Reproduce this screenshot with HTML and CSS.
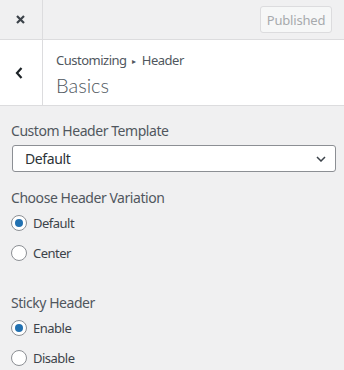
FILE: index.html
```html
<!DOCTYPE html>
<html lang="en">
<head>
    <meta charset="UTF-8">
    <meta name="viewport" content="width=device-width, initial-scale=1.0">
    <title>Customizing Header</title>
    <link rel="stylesheet" href="styles.css">
</head>
<body>
    <div class="panel">
        <div class="topbar">
            <div class="close-cell">
                <svg width="9" height="9" viewBox="0 0 9 9" class="icon">
                    <path d="M1 1 L8 8 M8 1 L1 8" stroke="#3c434a" stroke-width="2.2" fill="none"/>
                </svg>
            </div>
            <div class="publish-cell">
                <button class="publish-btn" disabled>Published</button>
            </div>
        </div>

        <div class="section-head">
            <div class="back-cell">
                <svg width="8" height="12" viewBox="0 0 8 12" class="icon">
                    <path d="M6.5 1 L2 6 L6.5 11" stroke="#1d2327" stroke-width="2.2" fill="none"/>
                </svg>
            </div>
            <div class="titles">
                <div class="crumb">Customizing <span class="sep">&#9656;</span> Header</div>
                <h2 class="title">Basics</h2>
            </div>
        </div>

        <div class="controls">
            <div class="control">
                <label class="control-label">Custom Header Template</label>
                <div class="select">
                    <span>Default</span>
                    <svg width="10" height="6" viewBox="0 0 10 6" class="chevron">
                        <path d="M1 1 L5 5 L9 1" stroke="#3c434a" stroke-width="1.5" fill="none"/>
                    </svg>
                </div>
            </div>

            <div class="control">
                <span class="control-label">Choose Header Variation</span>
                <div class="radio-row"><span class="radio checked"></span>Default</div>
                <div class="radio-row"><span class="radio"></span>Center</div>
            </div>

            <div class="control sticky">
                <span class="control-label">Sticky Header</span>
                <div class="radio-row"><span class="radio checked"></span>Enable</div>
                <div class="radio-row"><span class="radio"></span>Disable</div>
            </div>
        </div>
    </div>
</body>
</html>
```

FILE: styles.css
```css
* {
    margin: 0;
    padding: 0;
    box-sizing: border-box;
    font-family: 'Noto Sans', sans-serif;
}

body {
    background: #f0f0f1;
    width: 344px;
    height: 370px;
    overflow: hidden;
}

.icon {
    display: block;
}

.topbar {
    display: flex;
    height: 40px;
    border-bottom: 1px solid #dcdcde;
    background: #f0f0f1;
}

.close-cell {
    width: 43px;
    border-right: 1px solid #dcdcde;
    display: flex;
    justify-content: center;
    align-items: center;
    padding-right: 1px;
    padding-bottom: 1px;
}

.publish-cell {
    flex: 1;
    display: flex;
    justify-content: flex-end;
    padding: 6px 12px 0 0;
}

.publish-btn {
    width: 72px;
    height: 27px;
    background: #f6f7f7;
    border: 1px solid #dcdcde;
    border-radius: 3px;
    color: #a7aaad;
    font-size: 13px;
    letter-spacing: -0.2px;
}

.section-head {
    display: flex;
    height: 66px;
    background: white;
    border-bottom: 1px solid #dcdcde;
}

.back-cell {
    width: 43px;
    border-right: 1px solid #dcdcde;
    display: flex;
    justify-content: center;
    align-items: center;
    padding-right: 4px;
}

.titles {
    padding: 10px 0 0 13px;
}

.crumb {
    font-size: 13px;
    line-height: 20px;
    color: #50575e;
    letter-spacing: -0.5px;
}

.sep {
    font-size: 8px;
    vertical-align: 1px;
    padding: 0 3px;
}

.title {
    font-family: 'Lato', sans-serif;
    font-size: 20px;
    font-weight: 300;
    line-height: 26px;
    color: #50575e;
    margin-top: 1px;
}

.controls {
    padding: 15px 8px 0 11px;
}

.control {
    margin-bottom: 16px;
}

.control.sticky {
    margin-top: 30px;
}

.control-label {
    display: block;
    font-size: 14px;
    line-height: 20px;
    color: #50575e;
    letter-spacing: -0.45px;
    margin-bottom: 5px;
}

.control:first-child .control-label {
    margin-bottom: 4px;
}

.select {
    display: flex;
    justify-content: space-between;
    align-items: center;
    height: 27px;
    margin-left: 1px;
    padding: 0 9px 0 12px;
    background: white;
    border: 1px solid #8c8f94;
    border-radius: 3px;
    font-size: 14px;
    letter-spacing: -0.4px;
    color: #2c3338;
}

.radio-row {
    display: flex;
    align-items: center;
    height: 20px;
    margin-bottom: 10px;
    font-size: 13px;
    letter-spacing: -0.5px;
    color: #3c434a;
}

.radio {
    width: 16px;
    height: 16px;
    margin-right: 6px;
    border: 1px solid #8c8f94;
    border-radius: 50%;
    background: white;
    display: flex;
    justify-content: center;
    align-items: center;
}

.radio.checked::before {
    content: "";
    width: 8px;
    height: 8px;
    border-radius: 50%;
    background: #2271b1;
}
```
